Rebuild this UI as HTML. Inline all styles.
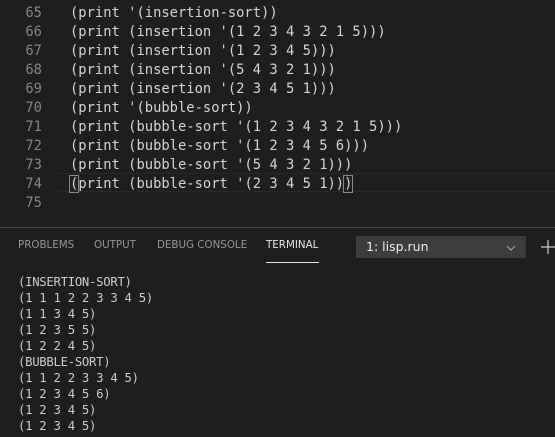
<html><head><style>
body{margin:0;background:#1e1e1e;width:555px;height:437px;overflow:hidden;position:relative;font-family:"DejaVu Sans Mono",monospace}
.ln{position:absolute;left:0;width:42px;text-align:right;color:#858585;font-size:13.8px;line-height:19px}
.code{position:absolute;left:70px;color:#d4d4d4;font-size:13.8px;line-height:19px;white-space:pre}
.cur{position:absolute;left:58px;right:0;top:173px;height:17px;border-top:1px solid #282828;border-bottom:1px solid #282828}
.br{outline:1px solid #888;}
.panel{position:absolute;left:0;right:0;top:227px;bottom:0;border-top:1px solid #414141}
.tab{position:absolute;top:11px;font-family:"DejaVu Sans",sans-serif;font-size:10.3px;color:#969696}
.term{position:absolute;left:18px;top:46px;color:#cccccc;font-size:12.3px;letter-spacing:-0.3px;line-height:16px;white-space:pre}
</style></head><body>
<div class="cur"></div>
<div class="ln" style="top:4px">65<br>66<br>67<br>68<br>69<br>70<br>71<br>72<br>73<br>74<br>75</div>
<div class="code" style="top:4px">(print '(insertion-sort))
(print (insertion '(1 2 3 4 3 2 1 5)))
(print (insertion '(1 2 3 4 5)))
(print (insertion '(5 4 3 2 1)))
(print (insertion '(2 3 4 5 1)))
(print '(bubble-sort))
(print (bubble-sort '(1 2 3 4 3 2 1 5)))
(print (bubble-sort '(1 2 3 4 5 6)))
(print (bubble-sort '(5 4 3 2 1)))
<span class="br">(</span>print (bubble-sort '(2 3 4 5 1))<span class="br">)</span></div>
<div class="panel">
<div class="tab" style="left:18px">PROBLEMS</div>
<div class="tab" style="left:94px">OUTPUT</div>
<div class="tab" style="left:157px">DEBUG CONSOLE</div>
<div class="tab" style="left:266px;color:#e7e7e7">TERMINAL</div>
<div style="position:absolute;left:266px;top:34px;width:53px;height:1px;background:#e7e7e7"></div>
<div style="position:absolute;left:356px;top:8px;width:170px;height:22px;background:#3c3c3c;font-family:'DejaVu Sans',sans-serif;font-size:12.5px;color:#f0f0f0;line-height:22px;text-indent:10px">1: lisp.run<svg style="position:absolute;left:150px;top:9px" width="10" height="6"><path d="M1 1L5 5L9 1" stroke="#aaa" fill="none"/></svg></div>
<svg style="position:absolute;left:541px;top:12px" width="14" height="14"><path d="M7 0V14M0 7H14" stroke="#ccc" stroke-width="1.2"/></svg>
<div class="term">(INSERTION-SORT)
(1 1 1 2 2 3 3 4 5)
(1 1 3 4 5)
(1 2 3 5 5)
(1 2 2 4 5)
(BUBBLE-SORT)
(1 1 2 2 3 3 4 5)
(1 2 3 4 5 6)
(1 2 3 4 5)
(1 2 3 4 5)</div>
</div>
</body></html>
